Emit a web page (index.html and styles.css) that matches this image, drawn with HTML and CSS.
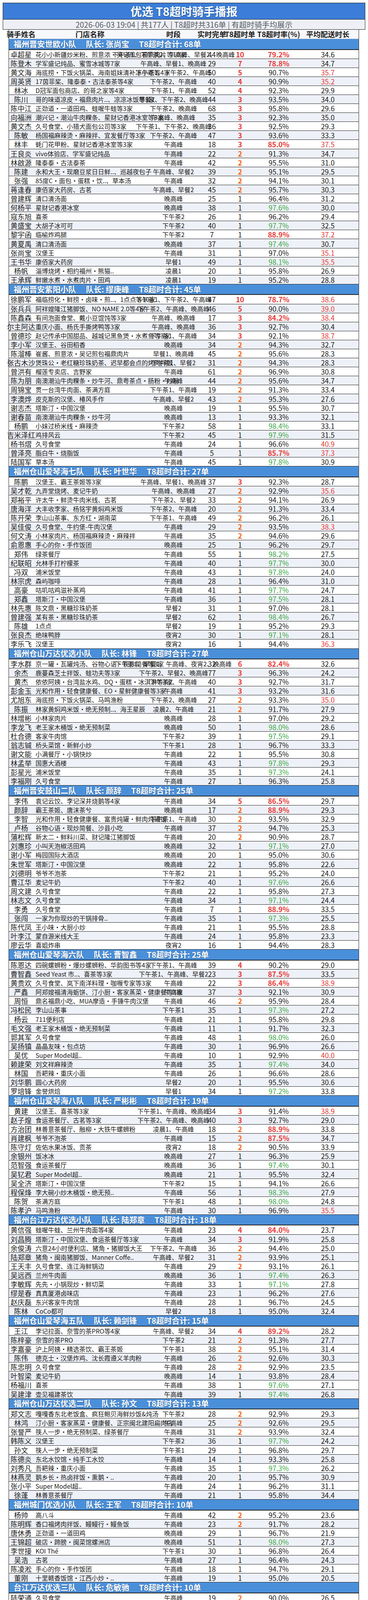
FILE: index.html
```html
<!DOCTYPE html>
<html lang="zh-CN">
<head>
<meta charset="utf-8">
<title>优选 T8超时骑手播报</title>
<link rel="stylesheet" href="styles.css">
</head>
<body>
<header class="banner">
  <h1 class="title">优选 T8超时骑手播报</h1>
  <p class="meta">2026-06-03 19:04 | 共177人 | T8超时共316单 | 有超时骑手均展示</p>
</header>
<main class="board">
  <div class="row head"><span>骑手姓名</span><span>门店名称</span><span>时段</span><span>实时完单</span><span>T8超时单</span><span>T8超时率(%)</span><span>平均配送时长</span></div>

  <section class="team">
    <h2 class="team-head"><span>福州晋安世欧小队</span><span>队长: 张尚宝</span><span>T8超时合计: 68单</span></h2>
    <div class="rows">
      <div class="row"><span>卓超星</span><span>花小小新疆炒米粉、煎意浓·吴记煎包福鼎肉片等10家</span><span>下午茶1、下午茶2、午高峰、早餐2、晚高峰</span><span>44</span><span class="r">10</span><span class="r">79.2%</span><span>34.6</span></div>
      <div class="row"><span>陈登木</span><span>学军盛记炖品、蜜雪冰城等7家</span><span>午高峰、早餐1、晚高峰</span><span>29</span><span class="r">7</span><span class="r">78.8%</span><span>34.7</span></div>
      <div class="row"><span>黄文海</span><span>海底捞·下饭火锅菜、海南姐妹清补凉小吃等4家</span><span>下午茶1、下午茶2、午高峰</span><span>50</span><span class="r">5</span><span>90.7%</span><span class="r">35.7</span></div>
      <div class="row"><span>周英贤</span><span>17茵菲桨、隆泰泰·古法泰茶等4家</span><span>下午茶2、午高峰</span><span>40</span><span class="r">4</span><span>90.9%</span><span class="r">35.2</span></div>
      <div class="row"><span>林冰</span><span>D冠军面包商店、的哥之家等4家</span><span>下午茶1、午高峰</span><span>52</span><span class="r">4</span><span>92.3%</span><span>29.9</span></div>
      <div class="row"><span>陈川</span><span>哥的味道凉皮·福鼎肉片..、凉凉冰饭等3家</span><span>早餐1、下午茶2、晚高峰</span><span>44</span><span class="r">3</span><span>93.5%</span><span>34.0</span></div>
      <div class="row"><span>陈中江</span><span>正劲道·一道田鸡、蛙喔牛蛙等3家</span><span>下午茶2、晚高峰</span><span>68</span><span class="r">3</span><span>95.8%</span><span>29.6</span></div>
      <div class="row"><span>向福洲</span><span>潮兴记·潮汕牛肉粿条、星财记香港冰室等3家</span><span>午高峰、晚高峰</span><span>35</span><span class="r">3</span><span>92.3%</span><span>35.0</span></div>
      <div class="row"><span>黄文杰</span><span>久号食堂、小猎犬面包公司等3家</span><span>下午茶1、下午茶2、晚高峰</span><span>36</span><span class="r">3</span><span>92.5%</span><span>29.3</span></div>
      <div class="row"><span>陈敏</span><span>杨国福麻辣烫·麻辣拌、宜发餐厅等3家</span><span>下午茶2、午高峰</span><span>47</span><span class="r">3</span><span>93.6%</span><span>33.3</span></div>
      <div class="row"><span>林丰</span><span>蚝门花甲粉、星财记香港冰室等3家</span><span>午高峰</span><span>18</span><span class="r">3</span><span class="r">85.0%</span><span class="r">37.5</span></div>
      <div class="row"><span>王良炎</span><span>vivo体验店、学军盛记炖品</span><span>午高峰</span><span>22</span><span class="o">2</span><span>91.3%</span><span>34.7</span></div>
      <div class="row"><span>林啟源</span><span>隆泰泰·古法泰茶</span><span>午高峰</span><span>42</span><span class="o">2</span><span>95.5%</span><span>31.0</span></div>
      <div class="row"><span>陈建</span><span>永和大王·现磨豆浆日日鲜..、巡越夜包子</span><span>午高峰、早餐2</span><span>39</span><span class="o">2</span><span>95.1%</span><span>29.5</span></div>
      <div class="row"><span>张强</span><span>85度C·面包·蛋糕·饮..、草本汤</span><span>午高峰</span><span>32</span><span class="o">2</span><span>94.1%</span><span>30.1</span></div>
      <div class="row"><span>蒋逢春</span><span>康佰家大药房、古茗</span><span>午高峰、早餐2</span><span>45</span><span class="o">2</span><span>95.7%</span><span>30.3</span></div>
      <div class="row"><span>曾建辉</span><span>清口清汤面</span><span>晚高峰</span><span>25</span><span>1</span><span>96.4%</span><span>31.2</span></div>
      <div class="row"><span>何杨平</span><span>星财记香港冰室</span><span>晚高峰</span><span>38</span><span>1</span><span class="g">97.6%</span><span>30.0</span></div>
      <div class="row"><span>寇东旭</span><span>喜茶</span><span>下午茶2</span><span>26</span><span>1</span><span>96.2%</span><span>29.4</span></div>
      <div class="row"><span>黄盛宝</span><span>大胡子冰可可</span><span>下午茶2</span><span>40</span><span>1</span><span class="g">97.7%</span><span>32.5</span></div>
      <div class="row"><span>黎宇函</span><span>临榆炸鸡腿</span><span>下午茶2</span><span>7</span><span>1</span><span class="r">88.9%</span><span class="r">37.2</span></div>
      <div class="row"><span>黄夏禹</span><span>清口清汤面</span><span>晚高峰</span><span>37</span><span>1</span><span class="g">97.4%</span><span>30.7</span></div>
      <div class="row"><span>张尚宝</span><span>汉堡王</span><span>午高峰</span><span>31</span><span>1</span><span>97.0%</span><span class="r">35.1</span></div>
      <div class="row"><span>王书华</span><span>康佰家大药房</span><span>早餐1</span><span>49</span><span>1</span><span class="g">98.1%</span><span class="r">35.5</span></div>
      <div class="row"><span>杨帆</span><span>淄博烧烤·相约福州·熊猫..</span><span>凌晨1</span><span>20</span><span>1</span><span>95.8%</span><span>26.9</span></div>
      <div class="row"><span>王承辉</span><span>鲜嫩水煮·水煮肉片·田鸡</span><span>凌晨1</span><span>19</span><span>1</span><span>95.2%</span><span>28.8</span></div>
    </div>
  </section>

  <section class="team">
    <h2 class="team-head"><span>福州晋安紫阳小队</span><span>队长: 缪庚峰</span><span>T8超时合计: 45单</span></h2>
    <div class="rows">
      <div class="row"><span>徐鹏军</span><span>福临捞化·鲜捞·卤味·煎..、1点点等10家</span><span>下午茶1、下午茶2、午高峰</span><span>47</span><span class="r">10</span><span class="r">78.7%</span><span class="r">38.6</span></div>
      <div class="row"><span>张兵兵</span><span>阿祥嫂隆江猪脚饭、NO NAME 2.0等4家</span><span>下午茶2、午高峰、晚高峰</span><span>46</span><span class="r">5</span><span>90.0%</span><span class="r">39.0</span></div>
      <div class="row"><span>陈鑫森</span><span>有间泡面食堂、戴小豆馄饨等3家</span><span>午高峰、晚高峰</span><span>17</span><span class="r">3</span><span class="r">84.2%</span><span class="r">38.4</span></div>
      <div class="row"><span>尔主阿达</span><span>重庆小面、杨氏手撕烤鸭等3家</span><span>午高峰、晚高峰</span><span>36</span><span class="r">3</span><span>92.7%</span><span>30.4</span></div>
      <div class="row"><span>曾德珍</span><span>赵记传承中国甜品、越城记黑鱼煲·水煮鱼等3家</span><span>下午茶1、午高峰</span><span>34</span><span class="r">3</span><span>92.1%</span><span class="r">38.7</span></div>
      <div class="row"><span>李小军</span><span>汉堡王、谷田稻香</span><span>晚高峰</span><span>34</span><span class="o">2</span><span>94.3%</span><span>32.7</span></div>
      <div class="row"><span>陈溜棒</span><span>崔酱、煎意浓·吴记煎包福鼎肉片</span><span>早餐1、晚高峰</span><span>45</span><span class="o">2</span><span>95.6%</span><span>28.3</span></div>
      <div class="row"><span>张古木沙</span><span>煲珠公·老红糖珍珠奶茶、迟早都会点的烤肉拌饭</span><span>下午茶1、早餐2</span><span>31</span><span class="o">2</span><span>94.3%</span><span>28.3</span></div>
      <div class="row"><span>曾洪有</span><span>榴莲专卖店、吉野家</span><span>午高峰</span><span>61</span><span class="o">2</span><span>96.9%</span><span>30.8</span></div>
      <div class="row"><span>陈为朋</span><span>南澳潮汕牛肉粿条·炒牛河、鼎粤茶点·肠粉·炒粉</span><span>午高峰</span><span>44</span><span class="o">2</span><span>95.6%</span><span>34.7</span></div>
      <div class="row"><span>周锦宝</span><span>贯一台湾牛肉面、茶满方庭</span><span>下午茶1、午高峰</span><span>19</span><span class="o">2</span><span>91.3%</span><span>33.4</span></div>
      <div class="row"><span>李澳烨</span><span>皮克斯的汉堡、椿风手作</span><span>午高峰、早餐2</span><span>43</span><span class="o">2</span><span>95.3%</span><span>27.6</span></div>
      <div class="row"><span>谢志杰</span><span>塔斯汀·中国汉堡</span><span>晚高峰</span><span>19</span><span>1</span><span>95.5%</span><span>30.7</span></div>
      <div class="row"><span>谢春苗</span><span>南澳潮汕牛肉粿条·炒牛河</span><span>晚高峰</span><span>13</span><span>1</span><span>93.3%</span><span>32.1</span></div>
      <div class="row"><span>杨鹏</span><span>小妹过桥米线·麻辣烫</span><span>下午茶2</span><span>58</span><span>1</span><span class="g">98.4%</span><span>33.1</span></div>
      <div class="row"><span>吉米泽红</span><span>鸡排风云</span><span>下午茶2</span><span>45</span><span>1</span><span class="g">97.9%</span><span>31.5</span></div>
      <div class="row"><span>杨书熠</span><span>久号食堂</span><span>午高峰</span><span>24</span><span>1</span><span>96.6%</span><span class="r">40.9</span></div>
      <div class="row"><span>曾泽亮</span><span>脂白牛·烧脂饭</span><span>午高峰</span><span>5</span><span>1</span><span class="r">85.7%</span><span class="r">37.3</span></div>
      <div class="row"><span>陆国军</span><span>草本汤</span><span>午高峰</span><span>45</span><span>1</span><span class="g">97.8%</span><span>30.9</span></div>
    </div>
  </section>

  <section class="team">
    <h2 class="team-head"><span>福州仓山爱琴海七队</span><span>队长: 叶世华</span><span>T8超时合计: 27单</span></h2>
    <div class="rows">
      <div class="row"><span>陈鹏</span><span>汉堡王、霸王茶姬等3家</span><span>午高峰、早餐1、晚高峰</span><span>37</span><span class="r">3</span><span>92.3%</span><span>28.7</span></div>
      <div class="row"><span>吴才乾</span><span>九弄堂烧烤、麦记牛奶</span><span>午高峰、晚高峰</span><span>27</span><span class="o">2</span><span>92.9%</span><span class="r">35.6</span></div>
      <div class="row"><span>郑裕平</span><span>许太牛·鲜烫牛肉米线、古茗</span><span>下午茶2、早餐2</span><span>33</span><span class="o">2</span><span>94.1%</span><span>26.9</span></div>
      <div class="row"><span>唐海洋</span><span>大丰收李家、杨铭宇黄焖鸡米饭</span><span>下午茶2、午高峰</span><span>20</span><span class="o">2</span><span>91.3%</span><span>33.4</span></div>
      <div class="row"><span>陈开荣</span><span>李山山茶事、东方红·湖南菜</span><span>下午茶1、午高峰</span><span>49</span><span class="o">2</span><span>96.2%</span><span>26.1</span></div>
      <div class="row"><span>吴佳俊</span><span>久号食堂、牛约堡-牛肉汉堡</span><span>午高峰</span><span>29</span><span class="o">2</span><span>93.5%</span><span class="r">38.3</span></div>
      <div class="row"><span>何文涛</span><span>小林家肉片、杨国福麻辣烫·麻辣拌</span><span>午高峰</span><span>35</span><span class="o">2</span><span>94.6%</span><span>29.6</span></div>
      <div class="row"><span>俞恩惠</span><span>手心的你·手作饭团</span><span>晚高峰</span><span>25</span><span>1</span><span>96.2%</span><span>29.7</span></div>
      <div class="row"><span>郑伟</span><span>绿茶餐厅</span><span>午高峰</span><span>55</span><span>1</span><span class="g">98.2%</span><span>27.5</span></div>
      <div class="row"><span>纪联昭</span><span>允林手打柠檬茶</span><span>午高峰</span><span>40</span><span>1</span><span class="g">97.7%</span><span>30.0</span></div>
      <div class="row"><span>冯双</span><span>浦米饭堂</span><span>午高峰</span><span>43</span><span>1</span><span class="g">97.8%</span><span>24.0</span></div>
      <div class="row"><span>林宗虎</span><span>森屿咖啡</span><span>午高峰</span><span>28</span><span>1</span><span>96.4%</span><span>31.0</span></div>
      <div class="row"><span>高豪</span><span>咕叽咕鸡滋补蒸鸡</span><span>午高峰</span><span>41</span><span>1</span><span class="g">97.7%</span><span>24.7</span></div>
      <div class="row"><span>郑鑫</span><span>塔斯汀·中国汉堡</span><span>午高峰</span><span>36</span><span>1</span><span class="g">97.5%</span><span>28.1</span></div>
      <div class="row"><span>林先惠</span><span>陈文鼎·黑糖珍珠奶茶</span><span>早餐2</span><span>31</span><span>1</span><span>97.0%</span><span>28.1</span></div>
      <div class="row"><span>曾建强</span><span>某有茶·黑糖珍珠奶茶</span><span>早餐2</span><span>62</span><span>1</span><span class="g">98.4%</span><span>26.7</span></div>
      <div class="row"><span>陈雄</span><span>1点点</span><span>早餐2</span><span>19</span><span>1</span><span>95.2%</span><span>29.3</span></div>
      <div class="row"><span>张良杰</span><span>绝味鸭脖</span><span>夜宵2</span><span>30</span><span>1</span><span class="g">97.1%</span><span>28.1</span></div>
      <div class="row"><span>李乐飞</span><span>汉堡王</span><span>夜宵2</span><span>16</span><span>1</span><span>94.4%</span><span class="r">36.3</span></div>
    </div>
  </section>

  <section class="team">
    <h2 class="team-head"><span>福州仓山万达优选小队</span><span>队长: 林锋</span><span>T8超时合计: 27单</span></h2>
    <div class="rows">
      <div class="row"><span>李水群</span><span>京一罐·瓦罐炖汤、谷物心语·现炒简餐等3家</span><span>下午茶1、早餐1、午高峰、夜宵2、晚高峰</span><span>32</span><span class="r">6</span><span class="r">82.4%</span><span>32.6</span></div>
      <div class="row"><span>余杰</span><span>鹿蔓森芝士拌饭、蛙功夫等3家</span><span>下午茶2、早餐2、晚高峰</span><span>77</span><span class="r">3</span><span>96.3%</span><span>24.2</span></div>
      <div class="row"><span>黄杰</span><span>依依阿姨·台湾盐水鸡、DQ·蛋糕·冰淇淋等3家</span><span>下午茶2、午高峰</span><span>40</span><span class="r">3</span><span>92.7%</span><span>31.7</span></div>
      <div class="row"><span>彭金玉</span><span>光和作用·轻食健康餐、EO·星鲜健康餐等3家</span><span>午高峰</span><span>41</span><span class="r">3</span><span>93.2%</span><span>31.6</span></div>
      <div class="row"><span>尤旭东</span><span>海底捞·下饭火锅菜、马鸣渔粉</span><span>下午茶2、晚高峰</span><span>27</span><span class="o">2</span><span>93.3%</span><span class="r">35.0</span></div>
      <div class="row"><span>陈振</span><span>林家黄焖鸡米饭•绝无预制..、海王星辰</span><span>凌晨2、午高峰</span><span>21</span><span class="o">2</span><span>91.7%</span><span>27.9</span></div>
      <div class="row"><span>林增彬</span><span>小林家肉片</span><span>晚高峰</span><span>28</span><span>1</span><span>97.0%</span><span>29.2</span></div>
      <div class="row"><span>李龙飞</span><span>老王家木桶饭·绝无预制菜</span><span>晚高峰</span><span>50</span><span>1</span><span class="g">98.0%</span><span>28.6</span></div>
      <div class="row"><span>杜合德</span><span>客家牛肉馆</span><span>下午茶2</span><span>39</span><span>1</span><span class="g">97.5%</span><span>29.1</span></div>
      <div class="row"><span>翁志铖</span><span>桥头菜馆·新鲜小炒</span><span>下午茶1</span><span>28</span><span>1</span><span>96.7%</span><span>33.3</span></div>
      <div class="row"><span>谢文能</span><span>小满餐厅·小锅快炒</span><span>午高峰</span><span>22</span><span>1</span><span>95.5%</span><span>30.8</span></div>
      <div class="row"><span>林孟举</span><span>国惠大酒楼</span><span>午高峰</span><span>43</span><span>1</span><span class="g">97.8%</span><span>29.3</span></div>
      <div class="row"><span>彭星光</span><span>浦米饭堂</span><span>午高峰</span><span>35</span><span>1</span><span class="g">97.3%</span><span>24.1</span></div>
      <div class="row"><span>李福刚</span><span>久号食堂</span><span>午高峰</span><span>27</span><span>1</span><span>96.3%</span><span>25.8</span></div>
    </div>
  </section>

  <section class="team">
    <h2 class="team-head"><span>福州晋安鼓山二队</span><span>队长: 颜辞</span><span>T8超时合计: 25单</span></h2>
    <div class="rows">
      <div class="row"><span>李伟</span><span>袁记云饺、李记深井烧鹅等4家</span><span>午高峰</span><span>34</span><span class="r">5</span><span class="r">86.5%</span><span>29.7</span></div>
      <div class="row"><span>颜辞</span><span>霸王茶姬、唐沫茶兮</span><span>晚高峰</span><span>17</span><span class="o">2</span><span class="r">88.9%</span><span>29.3</span></div>
      <div class="row"><span>李智</span><span>光和作用·轻食健康餐、富贵炖罐·鲜肉炖罐饭</span><span>下午茶1、午高峰</span><span>30</span><span class="o">2</span><span>93.5%</span><span>32.9</span></div>
      <div class="row"><span>卢杨</span><span>谷物心语·现炒简餐、沙县小吃</span><span>午高峰</span><span>37</span><span class="o">2</span><span>94.7%</span><span>25.3</span></div>
      <div class="row"><span>蒲松辉</span><span>新太二·鲜料川菜、财记隆江猪脚饭</span><span>午高峰</span><span>20</span><span class="o">2</span><span>90.9%</span><span>28.7</span></div>
      <div class="row"><span>刘惠珍</span><span>小叫天泡椒活田鸡</span><span>晚高峰</span><span>32</span><span>1</span><span class="g">97.1%</span><span>27.0</span></div>
      <div class="row"><span>谢小军</span><span>梅园国际大酒店</span><span>晚高峰</span><span>20</span><span>1</span><span>95.0%</span><span>30.6</span></div>
      <div class="row"><span>朱世军</span><span>塔斯汀·中国汉堡</span><span>晚高峰</span><span>22</span><span>1</span><span>95.8%</span><span>22.6</span></div>
      <div class="row"><span>刘德明</span><span>爷爷不泡茶</span><span>下午茶2</span><span>21</span><span>1</span><span>95.2%</span><span>24.0</span></div>
      <div class="row"><span>曹江华</span><span>麦记牛奶</span><span>下午茶2</span><span>40</span><span>1</span><span class="g">97.6%</span><span>26.6</span></div>
      <div class="row"><span>周文建</span><span>久号食堂</span><span>午高峰</span><span>22</span><span>1</span><span>95.8%</span><span>27.3</span></div>
      <div class="row"><span>林志文</span><span>久号食堂</span><span>午高峰</span><span>34</span><span>1</span><span class="g">97.1%</span><span>24.4</span></div>
      <div class="row"><span>李勇</span><span>久号食堂</span><span>午高峰</span><span>7</span><span>1</span><span class="r">88.9%</span><span>33.5</span></div>
      <div class="row"><span>张闯</span><span>一家为你现炒的干锅排骨..</span><span>午高峰</span><span>35</span><span>1</span><span class="g">97.3%</span><span>25.5</span></div>
      <div class="row"><span>陈代凤</span><span>王小味·大厨小炒</span><span>午高峰</span><span>21</span><span>1</span><span>95.5%</span><span>28.8</span></div>
      <div class="row"><span>叶李江</span><span>蒙自源米线大王</span><span>午高峰</span><span>24</span><span>1</span><span>95.8%</span><span>23.3</span></div>
      <div class="row"><span>廖云华</span><span>喜姐炸串</span><span>夜宵2</span><span>16</span><span>1</span><span>94.4%</span><span>28.3</span></div>
    </div>
  </section>

  <section class="team">
    <h2 class="team-head"><span>福州仓山爱琴海六队</span><span>队长: 曹智鑫</span><span>T8超时合计: 25单</span></h2>
    <div class="rows">
      <div class="row"><span>陈恩达</span><span>四碗螺蛳粉·爆炒螺蛳粉、华韵图书等4家</span><span>下午茶1、午高峰</span><span>39</span><span class="r">4</span><span>90.2%</span><span>29.0</span></div>
      <div class="row"><span>曹智鑫</span><span>Seed Yeast 市..、喜茶等3家</span><span>下午茶1、午高峰、早餐2</span><span>23</span><span class="r">3</span><span class="r">87.5%</span><span>33.5</span></div>
      <div class="row"><span>黄贵欢</span><span>久号食堂、岚下南洋料理·咖喱专家等3家</span><span>午高峰</span><span>22</span><span class="r">3</span><span class="r">86.4%</span><span class="r">38.9</span></div>
      <div class="row"><span>严鑫</span><span>阿郑嫂福清海蛎饼、汀小厨·客家蒸菜·健康餐等3家</span><span>午高峰</span><span>37</span><span class="r">3</span><span>92.1%</span><span>30.9</span></div>
      <div class="row"><span>周恒</span><span>鼎名福鼎小吃、MUA摩造·手锤牛肉汉堡</span><span>午高峰</span><span>46</span><span class="o">2</span><span>95.9%</span><span>28.4</span></div>
      <div class="row"><span>冯松民</span><span>李山山茶事</span><span>下午茶1</span><span>35</span><span>1</span><span class="g">97.3%</span><span>27.2</span></div>
      <div class="row"><span>杨云</span><span>711便利店</span><span>午高峰</span><span>21</span><span>1</span><span>95.8%</span><span>29.8</span></div>
      <div class="row"><span>毛文强</span><span>老王家木桶饭·绝无预制菜</span><span>午高峰</span><span>11</span><span>1</span><span>91.7%</span><span>32.3</span></div>
      <div class="row"><span>郭其军</span><span>久号食堂</span><span>午高峰</span><span>48</span><span>1</span><span class="g">98.0%</span><span>26.0</span></div>
      <div class="row"><span>吴扬镇</span><span>晶晶友味·包点坊</span><span>午高峰</span><span>30</span><span>1</span><span>96.9%</span><span>26.6</span></div>
      <div class="row"><span>吴优</span><span>Super Model超..</span><span>午高峰</span><span>10</span><span>1</span><span>92.9%</span><span class="r">40.0</span></div>
      <div class="row"><span>赖建荣</span><span>刘文祥麻辣烫</span><span>午高峰</span><span>35</span><span>1</span><span class="g">97.4%</span><span>34.0</span></div>
      <div class="row"><span>林国</span><span>吾耙辣·重庆小面</span><span>午高峰</span><span>26</span><span>1</span><span>96.6%</span><span>28.6</span></div>
      <div class="row"><span>刘华鹏</span><span>圆心大药房</span><span>早餐2</span><span>20</span><span>1</span><span>95.5%</span><span>30.6</span></div>
      <div class="row"><span>罗培锋</span><span>金誉烘焙</span><span>早餐1</span><span>34</span><span>1</span><span class="g">97.2%</span><span>33.8</span></div>
    </div>
  </section>

  <section class="team">
    <h2 class="team-head"><span>福州仓山爱琴海八队</span><span>队长: 严彬彬</span><span>T8超时合计: 19单</span></h2>
    <div class="rows">
      <div class="row"><span>黄建</span><span>汉堡王、喜茶等3家</span><span>下午茶1、午高峰、晚高峰</span><span>34</span><span class="r">3</span><span>91.4%</span><span class="r">38.9</span></div>
      <div class="row"><span>赵子煌</span><span>食运茶餐厅、古茗等3家</span><span>下午茶2、午高峰、晚高峰</span><span>40</span><span class="r">3</span><span>92.7%</span><span>29.0</span></div>
      <div class="row"><span>方治团</span><span>林善意茶餐厅、融柳·大铁牛螺蛳粉</span><span>凌晨1、午高峰</span><span>18</span><span class="o">2</span><span class="r">88.9%</span><span>33.8</span></div>
      <div class="row"><span>肖建枫</span><span>爷爷不泡茶</span><span>午高峰</span><span>15</span><span class="o">2</span><span class="r">87.5%</span><span>34.7</span></div>
      <div class="row"><span>陈守灯</span><span>佐佑水果冰饭、贡茶</span><span>夜宵2</span><span>18</span><span class="o">2</span><span>90.5%</span><span>33.9</span></div>
      <div class="row"><span>余银州</span><span>饭冰冰</span><span>晚高峰</span><span>27</span><span>1</span><span>96.3%</span><span>25.9</span></div>
      <div class="row"><span>范智强</span><span>食运茶餐厅</span><span>晚高峰</span><span>36</span><span>1</span><span class="g">97.4%</span><span>30.1</span></div>
      <div class="row"><span>吴钇君</span><span>Super Model超..</span><span>晚高峰</span><span>21</span><span>1</span><span>95.5%</span><span>32.4</span></div>
      <div class="row"><span>吴全济</span><span>塔斯汀·中国汉堡</span><span>下午茶2</span><span>15</span><span>1</span><span>94.1%</span><span>26.6</span></div>
      <div class="row"><span>程保烽</span><span>李大碗小炒木桶饭·绝无预..</span><span>午高峰</span><span>56</span><span>1</span><span class="g">98.3%</span><span>27.9</span></div>
      <div class="row"><span>陈贺</span><span>茶满方庭</span><span>下午茶1</span><span>48</span><span>1</span><span class="g">98.0%</span><span>24.8</span></div>
      <div class="row"><span>陈孝沪</span><span>马鸣渔粉</span><span>午高峰</span><span>30</span><span>1</span><span>96.9%</span><span class="r">35.5</span></div>
    </div>
  </section>

  <section class="team">
    <h2 class="team-head"><span>福州台江万达优选小队</span><span>队长: 陆郑章</span><span>T8超时合计: 18单</span></h2>
    <div class="rows">
      <div class="row"><span>黄信强</span><span>蛙喔牛蛙、兰州牛肉面等4家</span><span>午高峰</span><span>23</span><span class="r">4</span><span class="r">84.0%</span><span>23.7</span></div>
      <div class="row"><span>刘昌腾</span><span>塔斯汀·中国汉堡、食运茶餐厅等3家</span><span>午高峰</span><span>34</span><span class="r">3</span><span>91.9%</span><span>25.8</span></div>
      <div class="row"><span>余俊涛</span><span>六意24小时便利店、猪角·猪脚饭大王</span><span>下午茶2、午高峰</span><span>36</span><span class="o">2</span><span>94.4%</span><span>25.0</span></div>
      <div class="row"><span>陆郑章</span><span>猪角·闽南猪脚饭、Manner Coffe..</span><span>午高峰、早餐2</span><span>31</span><span class="o">2</span><span>93.9%</span><span>25.1</span></div>
      <div class="row"><span>王天丰</span><span>久号食堂、连江海鲜锅边</span><span>午高峰</span><span>29</span><span class="o">2</span><span>93.1%</span><span>26.1</span></div>
      <div class="row"><span>吴远西</span><span>兰州牛肉面</span><span>晚高峰</span><span>36</span><span>1</span><span class="g">97.4%</span><span>26.3</span></div>
      <div class="row"><span>李敏辉</span><span>先先·小锅现炒·鲜切菜</span><span>午高峰</span><span>33</span><span>1</span><span class="g">97.1%</span><span>27.8</span></div>
      <div class="row"><span>缪是春</span><span>真真厦港卤味店</span><span>午高峰</span><span>23</span><span>1</span><span>96.2%</span><span>27.6</span></div>
      <div class="row"><span>赵庆磊</span><span>东兴客家牛肉馆</span><span>午高峰</span><span>28</span><span>1</span><span>96.7%</span><span>24.5</span></div>
      <div class="row"><span>陈林</span><span>CoCo都可</span><span>早餐2</span><span>18</span><span>1</span><span>95.0%</span><span>32.4</span></div>
    </div>
  </section>

  <section class="team">
    <h2 class="team-head"><span>福州仓山爱琴海五队</span><span>队长: 赖剑锋</span><span>T8超时合计: 15单</span></h2>
    <div class="rows">
      <div class="row"><span>王江</span><span>李记拉面、奈雪的茶PRO等4家</span><span>午高峰、早餐2</span><span>34</span><span class="r">4</span><span class="r">89.2%</span><span>28.2</span></div>
      <div class="row"><span>陈梓豪</span><span>奈雪的茶PRO</span><span>下午茶2</span><span>21</span><span class="o">2</span><span>91.3%</span><span>27.7</span></div>
      <div class="row"><span>李嘉豪</span><span>沪上阿姨·精选茶饮、霸王茶姬</span><span>下午茶1</span><span>38</span><span class="o">2</span><span>95.1%</span><span>31.4</span></div>
      <div class="row"><span>陈伟</span><span>德克士·汉堡炸鸡、沈长霞遵义羊肉粉</span><span>午高峰</span><span>26</span><span class="o">2</span><span>92.6%</span><span>30.3</span></div>
      <div class="row"><span>陈忠明</span><span>久号食堂</span><span>午高峰</span><span>28</span><span class="o">2</span><span>92.9%</span><span>23.5</span></div>
      <div class="row"><span>叶智梁</span><span>麦记牛奶</span><span>晚高峰</span><span>14</span><span>1</span><span>93.8%</span><span>28.4</span></div>
      <div class="row"><span>杨福川</span><span>喜茶</span><span>午高峰</span><span>38</span><span>1</span><span class="g">97.6%</span><span>27.1</span></div>
      <div class="row"><span>吴建津</span><span>壶见福建茶饮</span><span>午高峰</span><span>39</span><span>1</span><span class="g">97.4%</span><span>26.8</span></div>
    </div>
  </section>

  <section class="team">
    <h2 class="team-head"><span>福州仓山万达优选二队</span><span>队长: 孙文</span><span>T8超时合计: 13单</span></h2>
    <div class="rows">
      <div class="row"><span>郑文志</span><span>嘎嘎香东北老饭盒、疯狂鲍贝海鲜炒饭&amp;炖汤</span><span>下午茶2</span><span>28</span><span class="o">2</span><span>92.9%</span><span>29.3</span></div>
      <div class="row"><span>林鸿</span><span>汀小厨·客家蒸菜·健康餐、正宗闽北建阳扁肉店</span><span>午高峰</span><span>25</span><span class="o">2</span><span>92.6%</span><span>29.5</span></div>
      <div class="row"><span>张誉严</span><span>筷人一步·绝无预制菜、绿茶餐厅</span><span>午高峰</span><span>31</span><span class="o">2</span><span>93.9%</span><span>32.4</span></div>
      <div class="row"><span>韩陈义</span><span>汉堡王</span><span>下午茶2</span><span>36</span><span>1</span><span class="g">97.7%</span><span>24.2</span></div>
      <div class="row"><span>孙文</span><span>筷人一步·绝无预制菜</span><span>下午茶1</span><span>29</span><span>1</span><span>96.8%</span><span>29.7</span></div>
      <div class="row"><span>陈德炎</span><span>东北水饺馆·纯手工水饺</span><span>午高峰</span><span>14</span><span>1</span><span>93.3%</span><span>25.8</span></div>
      <div class="row"><span>刘秀凡</span><span>吾耙辣·重庆小面</span><span>午高峰</span><span>35</span><span>1</span><span class="g">97.3%</span><span>26.2</span></div>
      <div class="row"><span>林燕灵</span><span>鹅乡长·热卤拌饭·熏鹅·..</span><span>午高峰</span><span>20</span><span>1</span><span>95.7%</span><span>30.9</span></div>
      <div class="row"><span>张小平</span><span>Super Model超..</span><span>午高峰</span><span>24</span><span>1</span><span>96.2%</span><span>31.1</span></div>
      <div class="row"><span>徐蓬</span><span>林善意茶餐厅</span><span>午高峰</span><span>21</span><span>1</span><span>95.8%</span><span>34.4</span></div>
    </div>
  </section>

  <section class="team">
    <h2 class="team-head"><span>福州城门优选小队</span><span>队长: 王军</span><span>T8超时合计: 10单</span></h2>
    <div class="rows">
      <div class="row"><span>杨帅</span><span>高八斗</span><span>午高峰</span><span>42</span><span class="o">2</span><span>95.2%</span><span>23.6</span></div>
      <div class="row"><span>陈明辉</span><span>香口福烤肉拌饭、鳗鳗行·鳗鱼饭</span><span>午高峰</span><span>23</span><span class="o">2</span><span>91.7%</span><span>28.2</span></div>
      <div class="row"><span>唐休勇</span><span>正劲道·一道田鸡</span><span>晚高峰</span><span>29</span><span>1</span><span>96.7%</span><span>21.9</span></div>
      <div class="row"><span>王锦超</span><span>破店·蹄膀·闽菜馆螺洲店</span><span>晚高峰</span><span>51</span><span>1</span><span class="g">98.0%</span><span>27.3</span></div>
      <div class="row"><span>李世接</span><span>KOI Thé</span><span>下午茶1</span><span>30</span><span>1</span><span>96.8%</span><span>26.4</span></div>
      <div class="row"><span>吴浩</span><span>古茗</span><span>午高峰</span><span>27</span><span>1</span><span>96.4%</span><span>24.3</span></div>
      <div class="row"><span>陈凌淞</span><span>手心的你·手作饭团</span><span>午高峰</span><span>18</span><span>1</span><span>94.7%</span><span>29.1</span></div>
      <div class="row"><span>董刚</span><span>十里赣香饭馆·江西小炒·..</span><span>午高峰</span><span>19</span><span>1</span><span>95.0%</span><span>20.5</span></div>
    </div>
  </section>

  <section class="team">
    <h2 class="team-head"><span>台江万达优选三队</span><span>队长: 危敏驰</span><span>T8超时合计: 10单</span></h2>
    <div class="rows">
      <div class="row"><span>陆荣通</span><span>久号食堂</span><span>午高峰</span><span>19</span><span class="o">2</span><span>90.0%</span><span>26.5</span></div>
      <div class="row"><span>瞿锦松</span><span>超酉广西老友粉、梅园国际大酒店</span><span>午高峰</span><span>19</span><span class="o">2</span><span class="r">89.5%</span><span class="r">38.5</span></div>
      <div class="row"><span>龙武林</span><span>古茗</span><span>下午茶1</span><span>40</span><span>1</span><span class="g">97.6%</span><span>27.0</span></div>
      <div class="row"><span>王成宇</span><span>大丰收·脆鱼</span><span>午高峰</span><span>75</span><span>1</span><span class="g">98.7%</span><span>21.9</span></div>
      <div class="row"><span>梁科</span><span>1点点</span><span>午高峰</span><span>25</span><span>1</span><span>96.6%</span><span>31.2</span></div>
      <div class="row"><span>郑君昊</span><span>广东肠粉</span><span>午高峰</span><span>23</span><span>1</span><span>96.4%</span><span>30.1</span></div>
      <div class="row"><span>李少飞</span><span>草本汤</span><span>午高峰</span><span>35</span><span>1</span><span class="g">97.3%</span><span>24.0</span></div>
      <div class="row"><span>吴盛斌</span><span>廖记鲜捞</span><span>午高峰</span><span>17</span><span>1</span><span>94.1%</span><span>30.7</span></div>
    </div>
  </section>

  <section class="team">
    <h2 class="team-head"><span>福州仓山爱琴海三队</span><span>队长: 陈绪彬</span><span>T8超时合计: 8单</span></h2>
    <div class="rows">
      <div class="row"><span>王官印</span><span>野人先生·现做冰淇淋、陈家生煎</span><span>下午茶1、午高峰</span><span>38</span><span class="o">2</span><span>95.0%</span><span>30.3</span></div>
      <div class="row"><span>叶金辉</span><span>吞口熊牛排手作意面、德克士·汉堡炸鸡</span><span>午高峰</span><span>26</span><span class="o">2</span><span>92.3%</span><span>32.6</span></div>
      <div class="row"><span>江佳文</span><span>沃喜欢·麻辣烫·麻辣拌·..</span><span>晚高峰</span><span>27</span><span>1</span><span>96.3%</span><span>28.2</span></div>
      <div class="row"><span>池守大</span><span>云隐小院碳烤羊肉·小龙虾</span><span>晚高峰</span><span>17</span><span>1</span><span>94.4%</span><span>28.5</span></div>
      <div class="row"><span>陈鸿炜</span><span>汀小厨·客家蒸菜·健康餐</span><span>下午茶2</span><span>14</span><span>1</span><span>93.3%</span><span>25.2</span></div>
      <div class="row"><span>王治清</span><span>粤味烧·劲脆烧肉</span><span>午高峰</span><span>26</span><span>1</span><span>96.6%</span><span>25.5</span></div>
    </div>
  </section>

  <section class="team">
    <h2 class="team-head"><span>福州城门优选二队</span><span>队长: 欧树峰</span><span>T8超时合计: 6单</span></h2>
    <div class="rows">
      <div class="row"><span>陈明辉</span><span>1点点、猪仔强把子肉肉酱米线</span><span>晚高峰</span><span>0</span><span class="o">2</span><span class="g">100.0%</span><span>-</span></div>
      <div class="row"><span>甘林泉</span><span>小叫天泡椒活田鸡</span><span>下午茶2</span><span>21</span><span>1</span><span>95.5%</span><span>25.2</span></div>
      <div class="row"><span>张国兵</span><span>蜜雪冰城</span><span>下午茶1</span><span>26</span><span>1</span><span>96.2%</span><span>23.8</span></div>
      <div class="row"><span>季立龙</span><span>蜜雪冰城</span><span>午高峰</span><span>15</span><span>1</span><span>93.8%</span><span>27.1</span></div>
      <div class="row"><span>刘浩楠</span><span>私町寿司</span><span>夜宵2</span><span>25</span><span>1</span><span>96.0%</span><span>23.5</span></div>
    </div>
  </section>
</main>
</body>
</html>
```

FILE: styles.css
```css
* {
  box-sizing: border-box;
}

html,
body {
  line-height: 1;
}

body {
  margin: 7px 7px 0;
  background: #ffffff;
  color: #1a1a1a;
  font-family: "Noto Sans CJK SC", "Noto Sans", "DejaVu Sans", sans-serif;
}

/* ---------- banner ---------- */
.banner {
  display: grid;
  grid-template-rows: 42px 25px;
  border: 1px solid #1c1c1c;
}

.title {
  margin: 0;
  display: flex;
  align-items: center;
  justify-content: center;
  min-height: 0;
  background: #3b7dd8;
  border-bottom: 1px solid #1c1c1c;
  color: #ffffff;
  font-size: 29px;
  font-weight: 700;
  line-height: 1;
  text-shadow: 0 1px 2px rgba(0, 0, 0, 0.45);
}

.meta {
  margin: 0;
  display: flex;
  align-items: center;
  justify-content: center;
  min-height: 0;
  background: #eef0f5;
  color: #555a63;
  font-size: 19.5px;
  line-height: 1;
}

/* ---------- board ---------- */
.board {
  display: block;
  width: 898px;
  margin-left: 15px;
  border-left: 1px solid #222222;
  border-right: 1px solid #222222;
}

.team {
  display: grid;
  grid-template-rows: 27.5px auto;
}

.rows {
  display: grid;
  grid-auto-rows: 23.1px;
}

.row {
  display: grid;
  grid-template-columns: 62px 291px 137px 60px 84px 114px 138px;
  grid-template-rows: 100%;
  height: 23.1px;
  border-bottom: 1px solid #222222;
  background: #ffffff;
  line-height: 1;
}

.row > span {
  display: flex;
  align-items: center;
  justify-content: center;
  min-width: 0;
  min-height: 0;
  white-space: nowrap;
  font-size: 18px;
  line-height: 1;
}

.row > span:nth-child(2) {
  justify-content: flex-start;
  padding-left: 6px;
  font-size: 16px;
}

.row > span:nth-child(3) {
  font-size: 16px;
}

.rows > .row:nth-child(even) {
  background: #eef1f8;
}

/* header row */
.row.head {
  height: 24px;
  background: #f7f8fb;
  border-bottom: 1px solid #b5b9c2;
  font-weight: 700;
}

.row.head > span:nth-child(n) {
  font-size: 18.5px;
  justify-content: center;
  padding-left: 0;
}

/* team header */
.team-head {
  display: flex;
  align-items: center;
  gap: 25px;
  min-height: 0;
  margin: 0;
  padding-left: 12px;
  background: #4a8fda;
  border-bottom: 2px solid #222222;
  color: #ffffff;
  font-size: 20px;
  font-weight: 700;
  line-height: 1;
  white-space: nowrap;
  text-shadow: 0 1px 2px rgba(0, 0, 0, 0.35);
}

/* value colours */
.r {
  color: #e53935;
}

.o {
  color: #f2600c;
}

.g {
  color: #3aa845;
}

.row > .r:nth-child(5),
.row > .o:nth-child(5),
.row > .r:nth-child(6) {
  font-weight: 700;
}
```
